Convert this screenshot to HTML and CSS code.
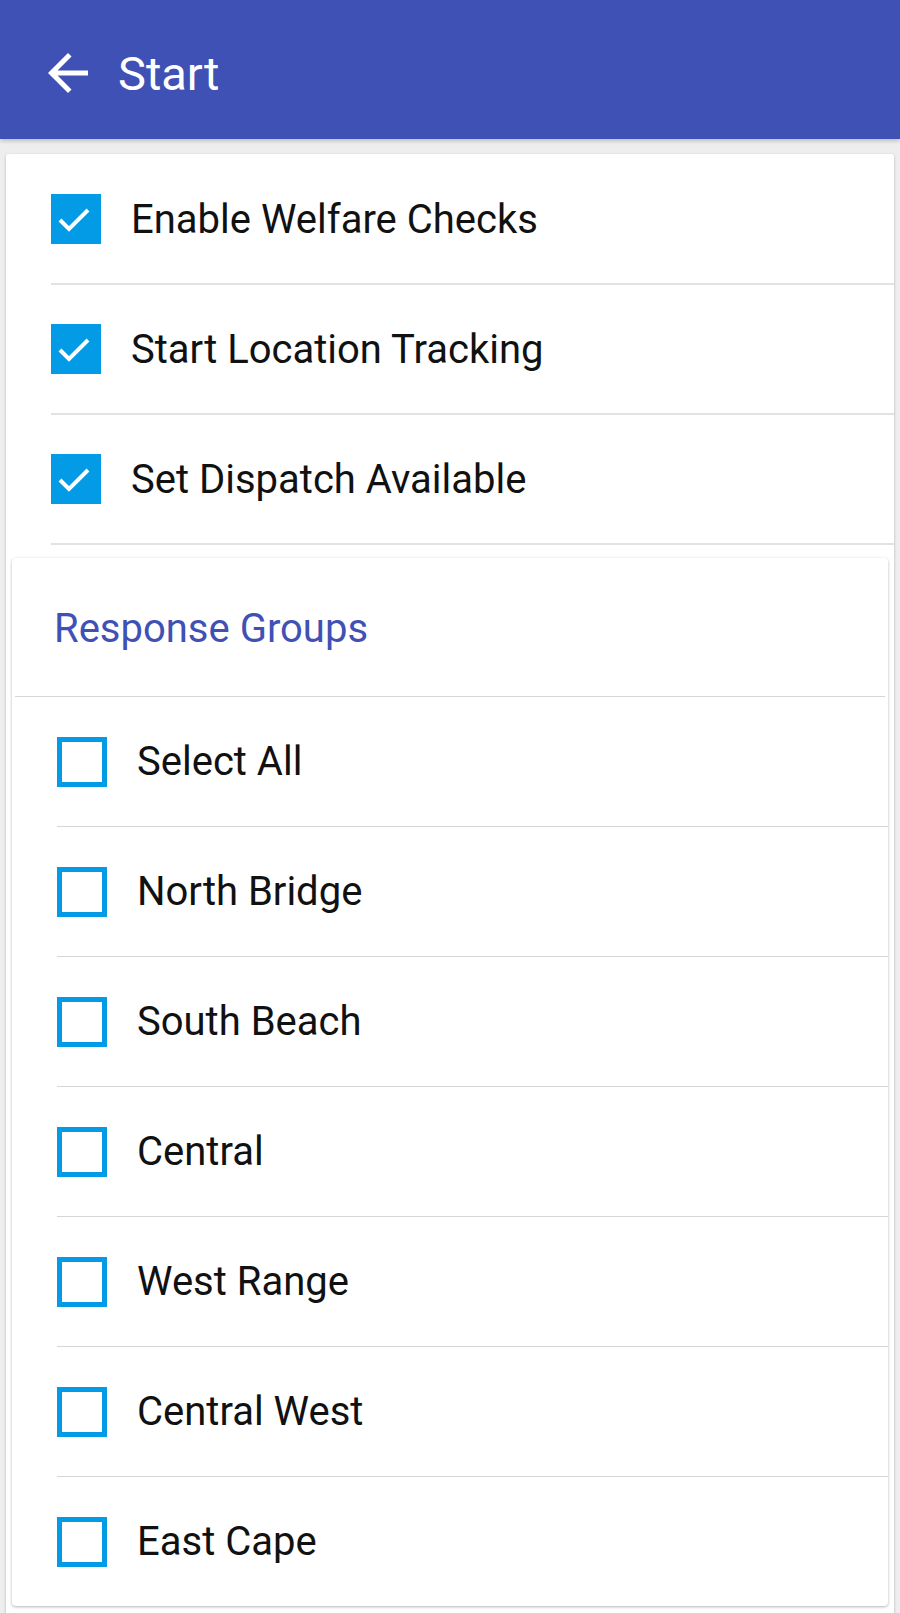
FILE: index.html
```html
<!DOCTYPE html>
<html>
<head>
<meta charset="utf-8">
<link rel="stylesheet" href="styles.css">
</head>
<body>
<header class="appbar">
  <svg class="back" viewBox="0 0 24 24" width="60" height="60"><path d="M20 11H7.830l5.59-5.59L12 4l-8 8 8 8 1.41-1.41L7.83 13H20v-2z" fill="#fff"/></svg>
  <span class="title">Start</span>
</header>
<main class="card">
  <div class="row">
    <span class="cb checked"><svg viewBox="0 0 50 50" width="50" height="50"><polyline points="9,26 18,35 37,16" fill="none" stroke="#fff" stroke-width="4"/></svg></span>
    <span class="label">Enable Welfare Checks</span>
  </div>
  <div class="row">
    <span class="cb checked"><svg viewBox="0 0 50 50" width="50" height="50"><polyline points="9,26 18,35 37,16" fill="none" stroke="#fff" stroke-width="4"/></svg></span>
    <span class="label">Start Location Tracking</span>
  </div>
  <div class="row">
    <span class="cb checked"><svg viewBox="0 0 50 50" width="50" height="50"><polyline points="9,26 18,35 37,16" fill="none" stroke="#fff" stroke-width="4"/></svg></span>
    <span class="label">Set Dispatch Available</span>
  </div>
  <section class="inner">
    <div class="inner-head">Response Groups</div>
    <div class="row irow"><span class="cb"></span><span class="label">Select All</span></div>
    <div class="row irow"><span class="cb"></span><span class="label">North Bridge</span></div>
    <div class="row irow"><span class="cb"></span><span class="label">South Beach</span></div>
    <div class="row irow"><span class="cb"></span><span class="label">Central</span></div>
    <div class="row irow"><span class="cb"></span><span class="label">West Range</span></div>
    <div class="row irow"><span class="cb"></span><span class="label">Central West</span></div>
    <div class="row irow last"><span class="cb"></span><span class="label">East Cape</span></div>
  </section>
</main>
</body>
</html>
```
FILE: styles.css
```css
html, body {
  margin: 0;
  padding: 0;
}
body {
  background: #eeeeee;
  font-family: Roboto, "Noto Sans", "Liberation Sans", sans-serif;
  color: #111;
  height: 1613px;
  overflow: hidden;
}
.appbar {
  height: 139px;
  background: #3f51b5;
  display: flex;
  align-items: center;
  padding-left: 38px;
  box-sizing: border-box;
  box-shadow: 0 2px 4px rgba(0,0,0,0.2);
  position: relative;
  z-index: 1;
}
.back {
  display: block;
  margin-top: 6px;
}
.title {
  color: #fff;
  font-size: 47px;
  margin-left: 20px;
  margin-top: 8px;
}
.card {
  display: block;
  margin: 15px 6px 0 6px;
  padding-top: 1px;
  background: #fff;
  border-radius: 3px;
  box-shadow: 0 1px 3px rgba(0,0,0,0.25);
  padding-bottom: 20px;
}
.row {
  height: 128px;
  margin-left: 45px;
  border-bottom: 2px solid #e2e2e2;
  display: flex;
  align-items: center;
}
.cb {
  width: 50px;
  height: 50px;
  box-sizing: border-box;
  border: 5px solid #039be5;
  flex: none;
  display: block;
}
.cb.checked {
  background: #039be5;
  border: none;
}
.cb svg {
  display: block;
}
.label {
  font-size: 40px;
  margin-left: 30px;
}
.inner {
  display: block;
  margin: 13px 6px 0 6px;
  background: #fff;
  border-radius: 4px;
  box-shadow: 0 1px 3px rgba(0,0,0,0.3);
}
.inner-head {
  height: 139px;
  margin: 0 3px;
  border-bottom: 1.5px solid #d6d6d6;
  color: #3f51b5;
  font-size: 40px;
  padding-left: 39px;
  display: flex;
  align-items: center;
  padding-top: 2px;
  box-sizing: border-box;
}
.irow {
  border-bottom: 1.5px solid #d6d6d6;
  height: 129px;
}
.irow .label {
  margin-left: 30px;
}
.irow.last {
  border-bottom: none;
}
```
